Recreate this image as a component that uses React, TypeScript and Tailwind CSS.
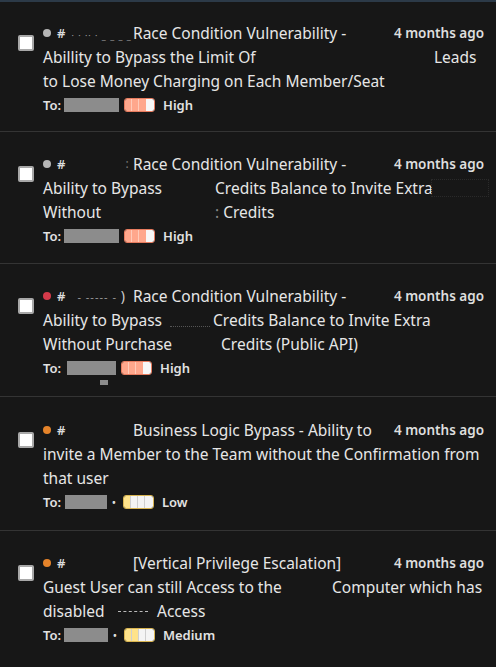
import React from "react";

type Sev = "High" | "Medium" | "Low";

function Badge({ sev }: { sev: Sev }) {
  if (sev === "High") {
    return (
      <span className="inline-flex h-[14px] w-[31px] overflow-hidden rounded-[3px] border border-[#e77c5f]">
        <span className="w-[7px] bg-[#ffa78c] border-r border-[#ffcbb9]" />
        <span className="w-[7px] bg-[#ffa78c] border-r border-[#ffcbb9]" />
        <span className="w-[7px] bg-[#ffa78c]" />
        <span className="flex-1 bg-[#f7f7f7]" />
      </span>
    );
  }
  const filled = sev === "Medium" ? 2 : 1;
  return (
    <span className="inline-flex h-[14px] w-[31px] overflow-hidden rounded-[3px] border border-[#d9b552]">
      {[0, 1, 2, 3].map((i) => (
        <span
          key={i}
          className={
            (i < filled ? "bg-[#ffe38a] " : "bg-[#f4f4f4] ") +
            (i < 3 ? "w-[7px] border-r border-[#cfcfcf]" : "flex-1")
          }
        />
      ))}
    </span>
  );
}

function Dot({ color }: { color: string }) {
  return <span className={"inline-block h-[8px] w-[8px] shrink-0 rounded-full " + color} />;
}

function Header({
  dot,
  artifact,
  title,
}: {
  dot: string;
  artifact: React.ReactNode;
  title: string;
}) {
  return (
    <div className="flex h-[24px] items-center whitespace-nowrap">
      <div className="flex w-[90px] shrink-0 items-center overflow-hidden">
        <Dot color={dot} />
        <span className="ml-[6px] shrink-0 text-[13px] font-semibold text-[#dcdcdc]">#</span>
        {artifact}
      </div>
      <span className="flex-1">{title}</span>
      <span className="text-[13.5px] font-semibold text-[#dedede]">4 months ago</span>
    </div>
  );
}

function ToRow({
  box,
  sev,
  bullet,
  extra,
}: {
  box: string;
  sev: Sev;
  bullet?: boolean;
  extra?: boolean;
}) {
  return (
    <div className="relative flex h-[24px] items-center whitespace-nowrap text-[13px] font-semibold text-[#e2e2e2]">
      <span>To:</span>
      <span className={"ml-[3px] inline-block h-[14px] bg-[#8c8c8c] " + box} />
      {bullet ? (
        <span className="ml-[5px] mr-[7px] text-[10px] text-[#dddddd]">•</span>
      ) : (
        <span className="ml-[5px]" />
      )}
      <Badge sev={sev} />
      <span className="ml-[8px]">{sev}</span>
      {extra && (
        <span className="absolute left-[57px] top-[24px] h-[5px] w-[8px] bg-[#8c8c8c]" />
      )}
    </div>
  );
}

function Card({
  children,
  pt,
  pb,
  border,
}: {
  children: React.ReactNode;
  pt: string;
  pb: string;
  border?: boolean;
}) {
  return (
    <div
      className={
        "flex items-start pl-[18px] pr-[12px] " +
        pt +
        " " +
        pb +
        (border ? " border-b border-[#343434]" : "")
      }
    >
      <span className="mt-[14px] h-[16px] w-[16px] shrink-0 rounded-[2px] border-2 border-[#a8a8a8] bg-white" />
      <div className="ml-[9px] flex-1 text-[15.5px] leading-[24px] text-[#e6e6e6]">{children}</div>
    </div>
  );
}

export default function App() {
  return (
    <div
      className="h-[667px] w-[496px] overflow-hidden bg-[#171717] border-t-2 border-[#2c3a48]"
      style={{ fontFamily: '"Noto Sans", "Open Sans", sans-serif' }}
    >
      <Card pt="pt-[19px]" pb="pb-[14px]" border>
        <Header
          dot="bg-[#b5b5b5]"
          title="Race Condition Vulnerability -"
          artifact={
            <span className="ml-[6px] mt-[6px] text-[9px] tracking-[1px] text-[#9a9a9a]">
              · · ·· · _ _ _ _
            </span>
          }
        />
        <div className="whitespace-nowrap">
          <span className="inline-block w-[391px]">Abillity to Bypass the Limit Of</span>
          <span>Leads</span>
        </div>
        <div className="whitespace-nowrap">to Lose Money Charging on Each Member/Seat</div>
        <ToRow box="w-[55px]" sev="High" />
      </Card>

      <Card pt="pt-[20px]" pb="pb-[15px]" border>
        <Header
          dot="bg-[#b5b5b5]"
          title="Race Condition Vulnerability -"
          artifact={<span className="ml-[60px] text-[12px] text-[#777]">:</span>}
        />
        <div className="relative whitespace-nowrap">
          <span className="inline-block w-[172px]">Ability to Bypass</span>
          <span>Credits Balance to Invite Extra</span>
          <span className="absolute left-[388px] top-[3px] h-[18px] w-[58px] border border-dotted border-[#2a2a2a]" />
        </div>
        <div className="whitespace-nowrap">
          <span className="inline-block w-[172px]">Without</span>
          <span className="text-[#888]">: </span>
          <span>Credits</span>
        </div>
        <ToRow box="w-[55px]" sev="High" />
      </Card>

      <Card pt="pt-[20px]" pb="pb-[16px]" border>
        <Header
          dot="bg-[#d43a4a]"
          title="Race Condition Vulnerability -"
          artifact={
            <span className="ml-[12px] text-[11px] tracking-[1px] text-[#9a9a9a]">
              - ----- ‐ <span className="text-[14px] text-[#cfcfcf]">)</span>
            </span>
          }
        />
        <div className="relative whitespace-nowrap">
          <span className="inline-block w-[170px]">Ability to Bypass</span>
          <span>Credits Balance to Invite Extra</span>
          <span className="absolute left-[127px] top-[18px] h-0 w-[40px] border-t border-dotted border-[#555]" />
        </div>
        <div className="whitespace-nowrap">
          <span className="inline-block w-[178px]">Without Purchase</span>
          <span>Credits (Public API)</span>
        </div>
        <ToRow box="w-[49px] ml-[6px]" sev="High" extra />
      </Card>

      <Card pt="pt-[21px]" pb="pb-[16px]" border>
        <Header
          dot="bg-[#e5832a]"
          title="Business Logic Bypass - Ability to"
          artifact={null}
        />
        <div className="whitespace-nowrap">invite a Member to the Team without the Confirmation from</div>
        <div className="whitespace-nowrap">that user</div>
        <ToRow box="w-[42px] ml-[4px]" sev="Low" bullet />
      </Card>

      <Card pt="pt-[20px]" pb="pb-[16px]">
        <Header
          dot="bg-[#e5832a]"
          title="[Vertical Privilege Escalation]"
          artifact={null}
        />
        <div className="whitespace-nowrap">
          <span className="inline-block w-[289px]">Guest User can still Access to the</span>
          <span>Computer which has</span>
        </div>
        <div className="flex items-center whitespace-nowrap">
          <span className="inline-block w-[75px]">disabled</span>
          <span className="inline-block h-0 w-[30px] border-t border-dashed border-[#bbb]" />
          <span className="ml-[9px]">Access</span>
        </div>
        <ToRow box="w-[44px] ml-[2px]" sev="Medium" bullet />
      </Card>
    </div>
  );
}
